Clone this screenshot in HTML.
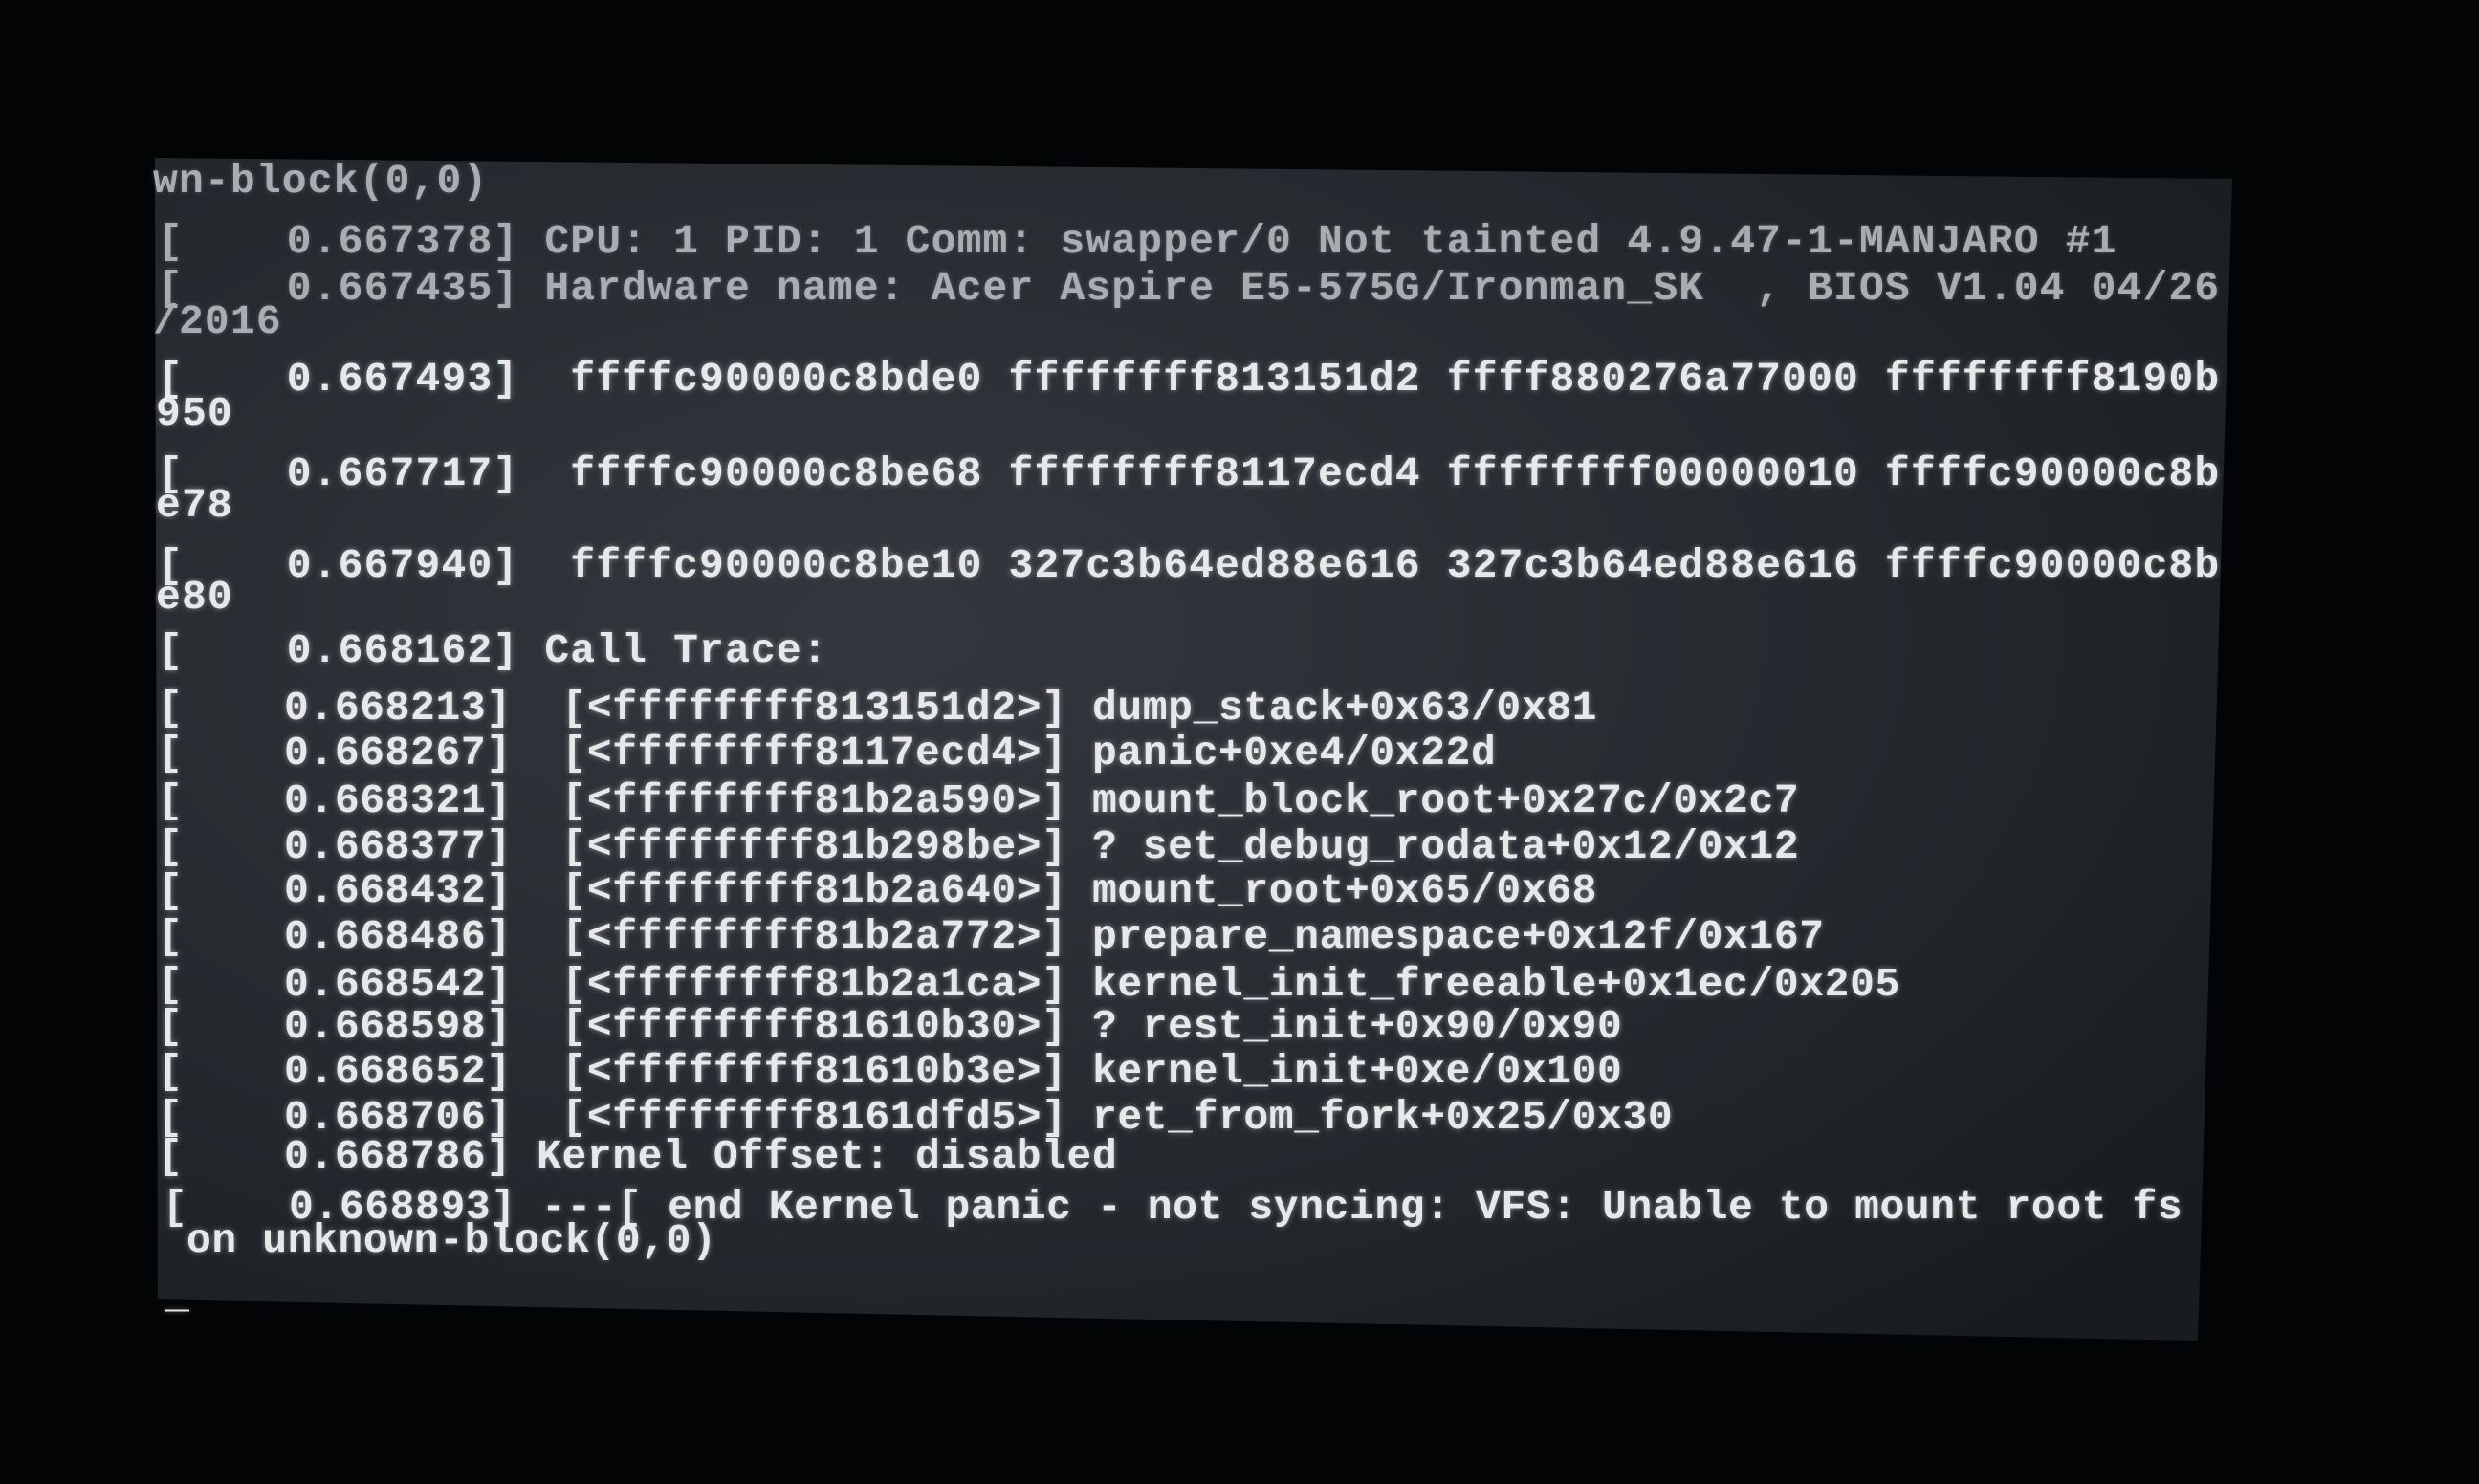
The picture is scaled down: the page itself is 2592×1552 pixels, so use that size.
<!DOCTYPE html>
<html><head><meta charset="utf-8"><style>
html,body{margin:0;padding:0;background:#030406;width:2592px;height:1552px;overflow:hidden;position:relative}
svg{position:absolute;left:0;top:0}
.l{position:absolute;font-family:"Liberation Mono",monospace;font-weight:bold;font-size:43px;line-height:44px;white-space:pre;letter-spacing:1.15px;color:#e6e8ea;text-shadow:0 0 6px rgba(255,255,255,0.45);margin-top:-22px}
.c{letter-spacing:0.6px}
.d{color:#a9adb2;text-shadow:0 0 4px rgba(200,200,200,0.3)}
</style></head><body>
<svg width="2592" height="1552">
<defs>
<radialGradient id="g" cx="0.35" cy="0.4" r="0.8">
<stop offset="0" stop-color="#33383e"/>
<stop offset="0.6" stop-color="#25292e"/>
<stop offset="1" stop-color="#181b1f"/>
</radialGradient>
</defs>
<polygon points="162,165 2334,187 2298,1402 165,1359" fill="url(#g)"/>
</svg>
<div class="l d" style="left:160px;top:190px">wn-block(0,0)</div>
<div class="l d" style="left:165px;top:253px">[    0.667378] CPU: 1 PID: 1 Comm: swapper/0 Not tainted 4.9.47-1-MANJARO #1</div>
<div class="l d" style="left:165px;top:302px">[    0.667435] Hardware name: Acer Aspire E5-575G/Ironman_SK  , BIOS V1.04 04/26</div>
<div class="l d" style="left:160px;top:337px">/2016</div>
<div class="l" style="left:165px;top:397px">[    0.667493]  ffffc90000c8bde0 ffffffff813151d2 ffff880276a77000 ffffffff8190b</div>
<div class="l" style="left:163px;top:433px">950</div>
<div class="l" style="left:165px;top:496px">[    0.667717]  ffffc90000c8be68 ffffffff8117ecd4 ffffffff00000010 ffffc90000c8b</div>
<div class="l" style="left:163px;top:529px">e78</div>
<div class="l" style="left:165px;top:592px">[    0.667940]  ffffc90000c8be10 327c3b64ed88e616 327c3b64ed88e616 ffffc90000c8b</div>
<div class="l" style="left:163px;top:625px">e80</div>
<div class="l" style="left:165px;top:681px">[    0.668162] Call Trace:</div>
<div class="l c" style="left:165px;top:741px">[    0.668213]  [&lt;ffffffff813151d2&gt;] dump_stack+0x63/0x81</div>
<div class="l c" style="left:165px;top:788px">[    0.668267]  [&lt;ffffffff8117ecd4&gt;] panic+0xe4/0x22d</div>
<div class="l c" style="left:165px;top:838px">[    0.668321]  [&lt;ffffffff81b2a590&gt;] mount_block_root+0x27c/0x2c7</div>
<div class="l c" style="left:165px;top:886px">[    0.668377]  [&lt;ffffffff81b298be&gt;] ? set_debug_rodata+0x12/0x12</div>
<div class="l c" style="left:165px;top:932px">[    0.668432]  [&lt;ffffffff81b2a640&gt;] mount_root+0x65/0x68</div>
<div class="l c" style="left:165px;top:980px">[    0.668486]  [&lt;ffffffff81b2a772&gt;] prepare_namespace+0x12f/0x167</div>
<div class="l c" style="left:165px;top:1030px">[    0.668542]  [&lt;ffffffff81b2a1ca&gt;] kernel_init_freeable+0x1ec/0x205</div>
<div class="l c" style="left:165px;top:1074px">[    0.668598]  [&lt;ffffffff81610b30&gt;] ? rest_init+0x90/0x90</div>
<div class="l c" style="left:165px;top:1121px">[    0.668652]  [&lt;ffffffff81610b3e&gt;] kernel_init+0xe/0x100</div>
<div class="l c" style="left:165px;top:1169px">[    0.668706]  [&lt;ffffffff8161dfd5&gt;] ret_from_fork+0x25/0x30</div>
<div class="l c" style="left:165px;top:1210px">[    0.668786] Kernel Offset: disabled</div>
<div class="l c" style="left:170px;top:1263px">[    0.668893] ---[ end Kernel panic - not syncing: VFS: Unable to mount root fs</div>
<div class="l c" style="left:195px;top:1298px">on unknown-block(0,0)</div>
<div class="l" style="left:172px;top:1356px">_</div>
</body></html>
